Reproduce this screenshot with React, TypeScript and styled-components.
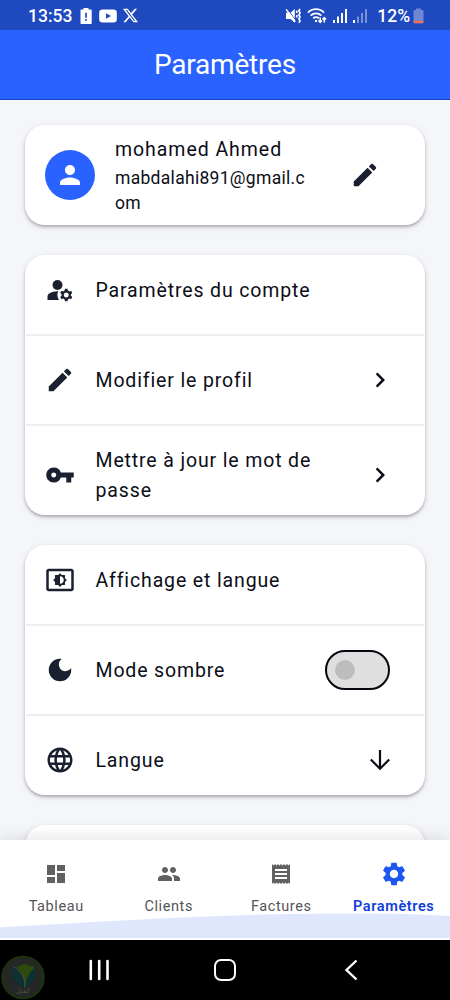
import React from "react";
import styled, { createGlobalStyle } from "styled-components";
import {
  MdPerson,
  MdEdit,
  MdManageAccounts,
  MdVpnKey,
  MdChevronRight,
  MdOutlineSettingsBrightness,
  MdDarkMode,
  MdLanguage,
  MdDashboard,
  MdPeople,
  MdReceipt,
  MdSettings,
} from "react-icons/md";

const GlobalStyle = createGlobalStyle`
  * { box-sizing: border-box; }
  body { margin: 0; background: #f5f6fa; font-family: Roboto, "Liberation Sans", sans-serif; }
  svg { display: block; flex: none; }
`;

const Screen = styled.div`
  width: 450px;
  height: 1000px;
  display: flex;
  flex-direction: column;
  overflow: hidden;
  background: #f5f6fa;
  color: #10131f;
`;

const StatusBar = styled.div`
  height: 30px;
  flex: none;
  display: flex;
  align-items: center;
  justify-content: space-between;
  padding: 1px 26px 0 28px;
  background: #1e49bf;
  color: #fff;
`;

const StatusGroup = styled.div<{ $gap: number }>`
  display: flex;
  align-items: center;
  gap: ${(p) => p.$gap}px;
`;

const StatusText = styled.span<{ $width: number }>`
  width: ${(p) => p.$width}px;
  font-size: 17.5px;
  line-height: 30px;
  font-weight: 500;
  white-space: nowrap;
`;

const Header = styled.header`
  height: 70px;
  flex: none;
  display: flex;
  align-items: center;
  justify-content: center;
  background: #2962ff;
  border-bottom: 1px solid #1542c4;
`;

const Title = styled.h1`
  margin: 0;
  color: #fff;
  font-size: 28px;
  letter-spacing: -0.2px;
  font-weight: 400;
  line-height: 68px;
`;

const Content = styled.main`
  flex: 1;
  min-height: 0;
  overflow: hidden;
  display: flex;
  flex-direction: column;
  gap: 30px;
  padding: 25px 25px 0;
`;

const Card = styled.section`
  flex: none;
  border-radius: 20px;
  background: #fff;
  box-shadow: 0 2px 3px rgba(0, 0, 0, 0.24), 0 2px 7px rgba(0, 0, 0, 0.1);
`;

const ProfileCard = styled(Card)`
  height: 100px;
  display: flex;
  align-items: center;
  padding: 0 45px 0 20px;
`;

const Avatar = styled.div`
  width: 50px;
  height: 50px;
  flex: none;
  display: grid;
  place-items: center;
  border-radius: 50%;
  background: #2962ff;
  color: #fff;
`;

const ProfileText = styled.div`
  width: 200px;
  margin: 0 auto 0 20px;
  color: #0b0d17;
`;

const Name = styled.div`
  font-size: 19.5px;
  line-height: 30px;
  letter-spacing: 0.95px;
`;

const Email = styled.div`
  margin-top: 1px;
  font-size: 17.5px;
  line-height: 25px;
  letter-spacing: 0.3px;
  word-break: break-all;
`;

const IconBox = styled.span<{ $dark?: boolean }>`
  display: grid;
  place-items: center;
  flex: none;
  color: ${(p) => (p.$dark ? "#0b0d17" : "#1b2030")};
`;

const Row = styled.div<{ $tall?: boolean }>`
  height: ${(p) => (p.$tall ? 80 : 70)}px;
  display: flex;
  align-items: center;
  gap: 20px;
  padding: 0 30px 0 20px;
`;

const Label = styled.span`
  flex: 1;
  padding: 1.5px 0 0 0.5px;
  font-size: 19.5px;
  line-height: 30px;
  letter-spacing: 0.86px;
  color: #0b0d17;
`;

const Divider = styled.hr`
  height: 2px;
  margin: 9px 1px;
  border: 0;
  background: #eeeeee;
`;

const Switch = styled.span`
  width: 65px;
  height: 40px;
  display: flex;
  align-items: center;
  margin-right: 5px;
  padding-left: 8px;
  border: 2px solid #05060f;
  border-radius: 20px;
  background: #dfdfdf;
`;

const Thumb = styled.span`
  width: 20px;
  height: 20px;
  border-radius: 50%;
  background: #bdbdbd;
`;

const TabBar = styled.nav`
  position: relative;
  height: 100px;
  flex: none;
  display: flex;
  background: #fff;
  box-shadow: 0 -4px 14px rgba(0, 0, 0, 0.09);
`;

const Wave = styled.svg`
  position: absolute;
  left: 0;
  bottom: 2px;
`;

const Tab = styled.div<{ $active?: boolean }>`
  position: relative;
  flex: 1;
  display: flex;
  flex-direction: column;
  align-items: center;
  padding-top: 20px;
  color: ${(p) => (p.$active ? "#1e56f0" : "#616161")};
`;

const TabIcon = styled.span`
  height: 28px;
  display: grid;
  place-items: center;
`;

const TabLabel = styled.span<{ $active?: boolean }>`
  margin-top: 9px;
  font-size: 14.5px;
  line-height: 20px;
  letter-spacing: 0.6px;
  white-space: nowrap;
  font-weight: ${(p) => (p.$active ? 600 : 400)};
  color: ${(p) => (p.$active ? "#0f3fd8" : "#555")};
`;

const SystemBar = styled.div`
  position: relative;
  height: 60px;
  flex: none;
  display: flex;
  align-items: center;
  justify-content: space-between;
  padding: 0 87px 0 84px;
  background: #000;
`;

const HomeButton = styled.span`
  width: 22px;
  height: 22px;
  margin-right: 4px;
  border: 2.4px solid #fff;
  border-radius: 7px;
`;

const Watermark = styled.svg`
  position: absolute;
  left: 0;
  top: 15px;
`;

const MarkText = styled.text`
  font-family: "DejaVu Sans", sans-serif;
  font-size: 7px;
  fill: #4a4e4a;
`;

const BatteryAlert = () => (
  <svg width="12" height="18" viewBox="0 0 12 18">
    <path fill="#fff" d="M3.5 1h5v1.5H11a.7.7 0 0 1 .7.7v13a.8.8 0 0 1-.8.8H1.3a.8.8 0 0 1-.8-.8v-13a.7.7 0 0 1 .7-.7h2.3z" />
    <path stroke="#1e49bf" strokeWidth="1.7" d="M6 5.7v5M6 12v1.7" />
  </svg>
);

const VideoLogo = () => (
  <svg width="18" height="14" viewBox="0 0 18 14">
    <rect x=".2" y=".5" width="17.6" height="13" rx="3.2" fill="#fff" />
    <path d="M7 4.2v5.6L12 7z" fill="#1e49bf" />
  </svg>
);

const XLogo = () => (
  <svg width="15" height="15" viewBox="0 0 24 24" fill="#fff">
    <path d="M18.9 1.15h3.68l-8.04 9.19L24 22.85h-7.41l-5.8-7.59-6.64 7.59H.46l8.6-9.83L0 1.15h7.59l5.25 6.94zm-1.3 19.5h2.04L6.48 3.24H4.3z" />
  </svg>
);

const MuteVibrate = () => (
  <svg width="16" height="16" viewBox="0 0 16 16" fill="none">
    <path fill="#fff" d="M1 4.8h4.500L9.800 1v13.800L5.500 11H1z" />
    <path stroke="#1e49bf" strokeWidth=".9" d="M2.500 1 10.500 12" />
    <path stroke="#fff" strokeWidth="1.600" d="M1.200 1.400 10.200 13.800" />
    <path stroke="#fff" strokeWidth="1.700" d="M11.800 2.500v2.500M11.800 7v2.500M15 .8l-1.100 2 1.100 2-1.100 2 1.100 2-1.100 2 1.100 2-1.100 1.900" />
  </svg>
);

const Wifi = () => (
  <svg width="20" height="16" viewBox="0 0 20 16" fill="none" stroke="#fff" strokeWidth="1.900">
    <path d="M1 4.600a11 11 0 0 1 16 0M3.700 7.600a7.500 7.500 0 0 1 10.600 0M6.200 10.400a4 4 0 0 1 5.600 0" />
    <circle cx="9" cy="13" r="1.200" fill="#fff" stroke="none" />
    <path strokeWidth="1.500" d="M13.200 9.500v5m-1.800-2 1.800 2 1.800-2M17.300 14.500v-5m-1.800 2 1.800-2 1.800 2" />
  </svg>
);

const Signal = ({ weak }: { weak?: boolean }) => (
  <svg width="14" height="16" viewBox="0 0 14 16" fill="#fff">
    <rect x="0" y="12" width="2" height="3" />
    <rect x="4" y="8.500" width="2" height="6.500" opacity={weak ? 0.4 : 1} />
    <rect x="8" y="5" width="2" height="10" opacity={weak ? 0.4 : 1} />
    <rect x="12" y="1" width="2" height="14" opacity={weak ? 0.4 : 1} />
  </svg>
);

const BatteryLow = () => (
  <svg width="11" height="16" viewBox="0 0 11 16">
    <path fill="#7088d3" d="M3 .5h5V2h1.500a1 1 0 0 1 1 1v11a1.300 1.300 0 0 1-1.300 1.300H1.800A1.300 1.300 0 0 1 .5 14V3a1 1 0 0 1 1-1H3z" />
    <path fill="#f0705a" d="M.5 12.800h10V14a1.300 1.300 0 0 1-1.300 1.300H1.800A1.300 1.300 0 0 1 .5 14z" />
  </svg>
);

const ArrowDown = () => (
  <svg width="30" height="30" viewBox="0 0 30 30" fill="none" stroke="currentColor" strokeWidth="2.200">
    <path d="M15 5v19M5.800 14.500l9.200 9.200 9.200-9.200" />
  </svg>
);

const tabs = [
  { label: "Tableau", icon: <MdDashboard size={24} /> },
  { label: "Clients", icon: <MdPeople size={24} /> },
  { label: "Factures", icon: <MdReceipt size={24} /> },
  { label: "Paramètres", icon: <MdSettings size={28} />, active: true },
];

export default function App() {
  return (
    <Screen>
      <GlobalStyle />
      <StatusBar>
        <StatusGroup $gap={7}>
          <StatusText $width={44.5}>13:53</StatusText>
          <BatteryAlert />
          <StatusGroup $gap={6}>
            <VideoLogo />
            <XLogo />
          </StatusGroup>
        </StatusGroup>
        <StatusGroup $gap={6}>
          <MuteVibrate />
          <Wifi />
          <Signal />
          <Signal weak />
          <StatusGroup $gap={2}>
            <StatusText $width={38}>&nbsp;12%</StatusText>
            <BatteryLow />
          </StatusGroup>
        </StatusGroup>
      </StatusBar>
      <Header>
        <Title>Paramètres</Title>
      </Header>
      <Content>
        <ProfileCard>
          <Avatar>
            <MdPerson size={30} />
          </Avatar>
          <ProfileText>
            <Name>mohamed Ahmed</Name>
            <Email>mabdalahi891@gmail.com</Email>
          </ProfileText>
          <IconBox>
            <MdEdit size={30} />
          </IconBox>
        </ProfileCard>
        <Card>
          <Row>
            <IconBox><MdManageAccounts size={30} /></IconBox>
            <Label>Paramètres du compte</Label>
          </Row>
          <Divider />
          <Row>
            <IconBox><MdEdit size={30} /></IconBox>
            <Label>Modifier le profil</Label>
            <IconBox $dark><MdChevronRight size={30} /></IconBox>
          </Row>
          <Divider />
          <Row $tall>
            <IconBox><MdVpnKey size={30} /></IconBox>
            <Label>Mettre à jour le mot de passe</Label>
            <IconBox $dark><MdChevronRight size={30} /></IconBox>
          </Row>
        </Card>
        <Card>
          <Row>
            <IconBox><MdOutlineSettingsBrightness size={30} /></IconBox>
            <Label>Affichage et langue</Label>
          </Row>
          <Divider />
          <Row>
            <IconBox><MdDarkMode size={30} /></IconBox>
            <Label>Mode sombre</Label>
            <Switch><Thumb /></Switch>
          </Row>
          <Divider />
          <Row>
            <IconBox><MdLanguage size={30} /></IconBox>
            <Label>Langue</Label>
            <IconBox $dark><ArrowDown /></IconBox>
          </Row>
        </Card>
        <Card>
          <Row />
        </Card>
      </Content>
      <TabBar>
        <Wave width="450" height="26" viewBox="0 0 450 26">
          <path fill="#dfe7fd" d="M0 15.500C110 9 200 4 275 2.300C340 .8 410 1 450 4V26H0z" />
        </Wave>
        {tabs.map((t) => (
          <Tab key={t.label} $active={t.active}>
            <TabIcon>{t.icon}</TabIcon>
            <TabLabel $active={t.active}>{t.label}</TabLabel>
          </Tab>
        ))}
      </TabBar>
      <SystemBar>
        <Watermark width="46" height="45" viewBox="0 0 46 45">
          <circle cx="23" cy="22.500" r="20.800" fill="#252725" stroke="#1c3310" strokeWidth="2" />
          <path fill="#2c4a0c" d="M16 11.500q5.500-.5 9-3 4 3 9 3 .5 14-9 20.500-1-13-9-20.500z" />
          <path fill="#0d3035" d="M12.500 12C20 17 25 23 23.800 32 13.500 29 10.500 20 12.500 12zM35 13c1 9-1 15-9.500 19 .5-8 3-14 9.500-19z" />
          <path fill="none" stroke="#4d514d" strokeWidth=".8" d="M13.500 11.500C22 17 26 24 24.500 32.500" />
          <MarkText x="23" y="38" textAnchor="middle">كفيل</MarkText>
        </Watermark>
        <svg width="30" height="24" viewBox="0 0 30 24" stroke="#fff" strokeWidth="2.600" strokeLinecap="round">
          <path d="M6.800 3v18M15.200 3v18M23.500 3v18" />
        </svg>
        <HomeButton />
        <svg width="24" height="24" viewBox="0 0 24 24" fill="none" stroke="#fff" strokeWidth="2.400">
          <path d="M17.500 2.500 7.500 12l10 9.500" />
        </svg>
      </SystemBar>
    </Screen>
  );
}
